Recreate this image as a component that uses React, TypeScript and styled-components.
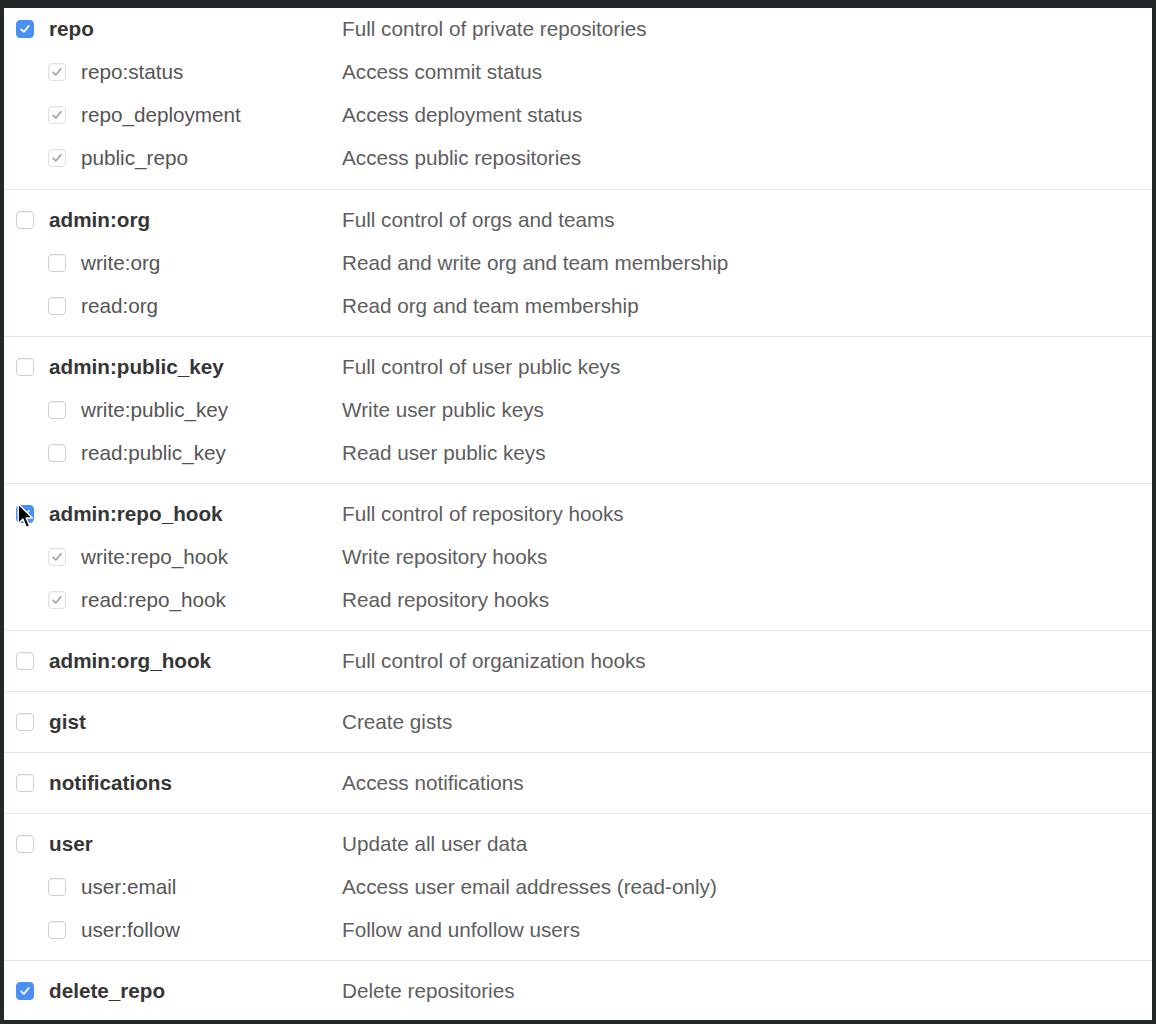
import React from "react";
import styled, { createGlobalStyle } from "styled-components";

const GlobalStyle = createGlobalStyle`
  html, body {
    margin: 0;
    padding: 0;
    background: #232828;
  }
  body {
    font-family: "Liberation Sans", Arial, Helvetica, sans-serif;
  }
`;

const Frame = styled.div`
  width: 1156px;
  height: 1024px;
  box-sizing: border-box;
  padding: 8px 4px 4px 4px;
  background: #232828;
`;

const Panel = styled.div`
  height: 100%;
  background: #ffffff;
  overflow: hidden;
  display: flex;
  flex-direction: column;
`;

const Group = styled.div`
  padding: 9px 0 8px;
  border-bottom: 1px solid #e6e6e6;
  &:first-child {
    padding-top: 0;
    padding-bottom: 9px;
  }
  &:last-child {
    border-bottom: none;
  }
`;

const Row = styled.div`
  display: grid;
  grid-template-columns: 338px 1fr;
  align-items: center;
  height: 43px;
  line-height: 1;
`;

const LabelCell = styled.div<{ $sub?: boolean }>`
  display: flex;
  align-items: center;
  gap: 15px;
  padding-left: ${(p) => (p.$sub ? "44px" : "12px")};
`;

const Box = styled.span<{ $checked?: boolean; $sub?: boolean }>`
  position: relative;
  flex: none;
  width: 18px;
  height: 18px;
  border-radius: 4px;
  box-sizing: border-box;
  display: flex;
  align-items: center;
  justify-content: center;
  background: ${(p) => (p.$checked && !p.$sub ? "#4a90f4" : "#ffffff")};
  border: 1px solid
    ${(p) => (p.$checked && !p.$sub ? "#4a90f4" : p.$sub && p.$checked ? "#e0e0e0" : "#cfcfcf")};
  box-shadow: ${(p) => (p.$checked && !p.$sub ? "none" : "inset 0 1px 1px rgba(0,0,0,0.04)")};
`;

const Name = styled.span<{ $sub?: boolean }>`
  font-size: 20.7px;
  font-weight: ${(p) => (p.$sub ? 400 : 700)};
  color: ${(p) => (p.$sub ? "#555555" : "#363636")};
  white-space: nowrap;
`;

const Desc = styled.span`
  font-size: 20.7px;
  color: #5e5e5e;
  white-space: nowrap;
`;

const Cursor = styled.svg`
  position: absolute;
  left: 0px;
  top: -3px;
  width: 17px;
  height: 27px;
  pointer-events: none;
`;

const Check = ({ color }: { color: string }) => (
  <svg width="12" height="12" viewBox="0 0 11 11">
    <path
      d="M2 5.8 L4.4 8.2 L9 2.6"
      fill="none"
      stroke={color}
      strokeWidth="1.6"
      strokeLinecap="round"
      strokeLinejoin="round"
    />
  </svg>
);

type Item = { name: string; desc: string };
type Scope = {
  name: string;
  desc: string;
  checked?: boolean;
  cursor?: boolean;
  children?: Item[];
};

const scopes: Scope[] = [
  {
    name: "repo",
    desc: "Full control of private repositories",
    checked: true,
    children: [
      { name: "repo:status", desc: "Access commit status" },
      { name: "repo_deployment", desc: "Access deployment status" },
      { name: "public_repo", desc: "Access public repositories" },
    ],
  },
  {
    name: "admin:org",
    desc: "Full control of orgs and teams",
    children: [
      { name: "write:org", desc: "Read and write org and team membership" },
      { name: "read:org", desc: "Read org and team membership" },
    ],
  },
  {
    name: "admin:public_key",
    desc: "Full control of user public keys",
    children: [
      { name: "write:public_key", desc: "Write user public keys" },
      { name: "read:public_key", desc: "Read user public keys" },
    ],
  },
  {
    name: "admin:repo_hook",
    desc: "Full control of repository hooks",
    checked: true,
    cursor: true,
    children: [
      { name: "write:repo_hook", desc: "Write repository hooks" },
      { name: "read:repo_hook", desc: "Read repository hooks" },
    ],
  },
  { name: "admin:org_hook", desc: "Full control of organization hooks" },
  { name: "gist", desc: "Create gists" },
  { name: "notifications", desc: "Access notifications" },
  {
    name: "user",
    desc: "Update all user data",
    children: [
      { name: "user:email", desc: "Access user email addresses (read-only)" },
      { name: "user:follow", desc: "Follow and unfollow users" },
    ],
  },
  { name: "delete_repo", desc: "Delete repositories", checked: true },
];

export default function App() {
  return (
    <>
      <GlobalStyle />
      <Frame>
        <Panel>
          {scopes.map((s) => (
            <Group key={s.name}>
              <Row>
                <LabelCell>
                  <Box $checked={s.checked}>
                    {s.checked && <Check color="#ffffff" />}
                    {s.cursor && (
                      <Cursor viewBox="0 0 16 26">
                        <path
                          d="M1 1 L1 20 L5.5 15.5 L9 23.5 L12 22.2 L8.6 14.4 L14.6 14.4 Z"
                          fill="#000000"
                          stroke="#ffffff"
                          strokeWidth="1.3"
                          strokeLinejoin="round"
                        />
                      </Cursor>
                    )}
                  </Box>
                  <Name>{s.name}</Name>
                </LabelCell>
                <Desc>{s.desc}</Desc>
              </Row>
              {s.children?.map((c) => (
                <Row key={c.name}>
                  <LabelCell $sub>
                    <Box $sub $checked={s.checked}>
                      {s.checked && <Check color="#a6a6a6" />}
                    </Box>
                    <Name $sub>{c.name}</Name>
                  </LabelCell>
                  <Desc>{c.desc}</Desc>
                </Row>
              ))}
            </Group>
          ))}
        </Panel>
      </Frame>
    </>
  );
}
